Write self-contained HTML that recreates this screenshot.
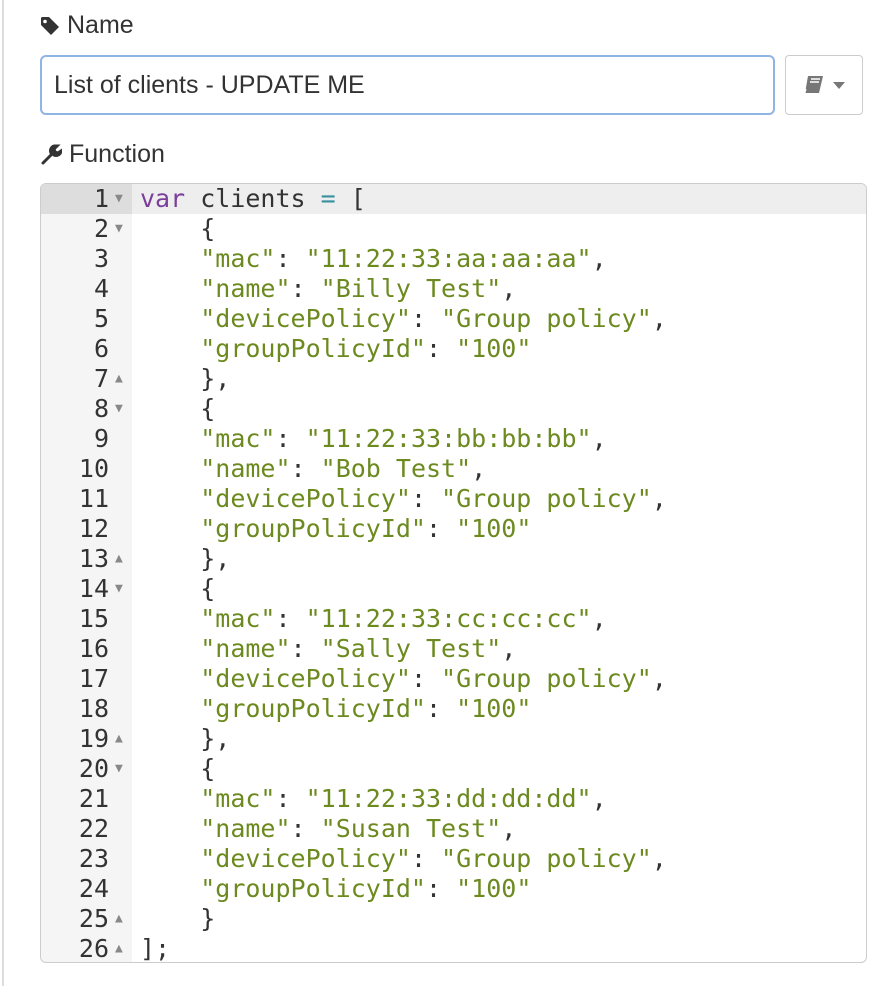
<!DOCTYPE html>
<html><head><style>
body{margin:0;width:886px;height:986px;background:#fff;position:relative;font-family:"Liberation Sans",Arial,sans-serif;color:#333;overflow:hidden}
.vl{position:absolute;left:2px;top:0;width:2px;height:986px;background:#ddd}
.lbl{position:absolute;left:40px;font-size:25px;color:#333;display:flex;align-items:center;gap:7px}
.inp{position:absolute;left:40px;top:55px;height:56px;border:2px solid #8fb4e6;border-radius:6px;font-size:25px;line-height:56px;padding-left:12px;box-sizing:content-box;width:719px}
.btn{position:absolute;left:785px;top:55px;width:76px;height:58px;border:1px solid #ccc;border-radius:4px;display:flex;align-items:center;justify-content:center;gap:8px}
.ed{position:absolute;left:40px;top:183px;width:825px;height:778px;border:1px solid #ccc;border-radius:6px;overflow:hidden;background:#fff}
.gut{position:absolute;left:0;top:0;width:91px;height:100%;background:#f5f5f5}
.row{position:absolute;left:0;width:100%;height:30px;font-family:"DejaVu Sans Mono",monospace;font-size:25px;line-height:30px;white-space:pre}
.n{position:absolute;left:0;width:68px;text-align:right;color:#333}
.f{position:absolute;left:74px;top:0;color:#888;font-size:13px}
.c{position:absolute;left:99px;color:#333}
.k{color:#7a3e9d}.o{color:#3a8f9e}.s{color:#6c8a1f}
</style></head><body>
<div class="vl"></div>
<div class="lbl" style="top:11px"><svg width="20" height="20" viewBox="0 0 20 20"><path d="M1 2v7l10 10 8-8L9 1H2z" fill="#333"/><circle cx="5" cy="5.5" r="1.8" fill="#fff"/></svg>Name</div>
<div class="inp">List of clients - UPDATE ME</div>
<div class="btn"><svg width="22" height="20" viewBox="0 0 22 20"><path d="M5 1h15l-4 17H2z" fill="#777"/><path d="M8 4h9M7 7h9" stroke="#fff" stroke-width="1.5"/><path d="M2 18l1-4" stroke="#fff"/></svg><svg width="12" height="7"><path d="M0 0h12L6 7z" fill="#777"/></svg></div>
<div class="lbl" style="top:140px"><svg width="22" height="22" viewBox="0 0 22 22"><path d="M3 19l9-9M14 2a5 5 0 0 0-3 7l3 2a5 5 0 0 0 7-4l-3 2-3-1-1-3 3-3z" stroke="#333" stroke-width="3" fill="#333" stroke-linecap="round"/></svg>Function</div>
<div class="ed"><div class="gut"></div>
<div class="row" style="top:0;background:#eee"><span style="position:absolute;left:0;top:0;width:91px;height:30px;background:#ddd"></span><span class="n">1</span><span class="f">▼</span><span class="c"><span class="k">var</span> clients <span class="o">=</span> [</span></div>
<div class="row" style="top:30px"><span class="n">2</span><span class="f">▼</span><span class="c">    {</span></div>
<div class="row" style="top:60px"><span class="n">3</span><span class="c">    <span class="s">"mac"</span>: <span class="s">"11:22:33:aa:aa:aa"</span>,</span></div>
<div class="row" style="top:90px"><span class="n">4</span><span class="c">    <span class="s">"name"</span>: <span class="s">"Billy Test"</span>,</span></div>
<div class="row" style="top:120px"><span class="n">5</span><span class="c">    <span class="s">"devicePolicy"</span>: <span class="s">"Group policy"</span>,</span></div>
<div class="row" style="top:150px"><span class="n">6</span><span class="c">    <span class="s">"groupPolicyId"</span>: <span class="s">"100"</span></span></div>
<div class="row" style="top:180px"><span class="n">7</span><span class="f">▲</span><span class="c">    },</span></div>
<div class="row" style="top:210px"><span class="n">8</span><span class="f">▼</span><span class="c">    {</span></div>
<div class="row" style="top:240px"><span class="n">9</span><span class="c">    <span class="s">"mac"</span>: <span class="s">"11:22:33:bb:bb:bb"</span>,</span></div>
<div class="row" style="top:270px"><span class="n">10</span><span class="c">    <span class="s">"name"</span>: <span class="s">"Bob Test"</span>,</span></div>
<div class="row" style="top:300px"><span class="n">11</span><span class="c">    <span class="s">"devicePolicy"</span>: <span class="s">"Group policy"</span>,</span></div>
<div class="row" style="top:330px"><span class="n">12</span><span class="c">    <span class="s">"groupPolicyId"</span>: <span class="s">"100"</span></span></div>
<div class="row" style="top:360px"><span class="n">13</span><span class="f">▲</span><span class="c">    },</span></div>
<div class="row" style="top:390px"><span class="n">14</span><span class="f">▼</span><span class="c">    {</span></div>
<div class="row" style="top:420px"><span class="n">15</span><span class="c">    <span class="s">"mac"</span>: <span class="s">"11:22:33:cc:cc:cc"</span>,</span></div>
<div class="row" style="top:450px"><span class="n">16</span><span class="c">    <span class="s">"name"</span>: <span class="s">"Sally Test"</span>,</span></div>
<div class="row" style="top:480px"><span class="n">17</span><span class="c">    <span class="s">"devicePolicy"</span>: <span class="s">"Group policy"</span>,</span></div>
<div class="row" style="top:510px"><span class="n">18</span><span class="c">    <span class="s">"groupPolicyId"</span>: <span class="s">"100"</span></span></div>
<div class="row" style="top:540px"><span class="n">19</span><span class="f">▲</span><span class="c">    },</span></div>
<div class="row" style="top:570px"><span class="n">20</span><span class="f">▼</span><span class="c">    {</span></div>
<div class="row" style="top:600px"><span class="n">21</span><span class="c">    <span class="s">"mac"</span>: <span class="s">"11:22:33:dd:dd:dd"</span>,</span></div>
<div class="row" style="top:630px"><span class="n">22</span><span class="c">    <span class="s">"name"</span>: <span class="s">"Susan Test"</span>,</span></div>
<div class="row" style="top:660px"><span class="n">23</span><span class="c">    <span class="s">"devicePolicy"</span>: <span class="s">"Group policy"</span>,</span></div>
<div class="row" style="top:690px"><span class="n">24</span><span class="c">    <span class="s">"groupPolicyId"</span>: <span class="s">"100"</span></span></div>
<div class="row" style="top:720px"><span class="n">25</span><span class="f">▲</span><span class="c">    }</span></div>
<div class="row" style="top:750px"><span class="n">26</span><span class="f">▲</span><span class="c">];</span></div>
</div>
</body></html>
